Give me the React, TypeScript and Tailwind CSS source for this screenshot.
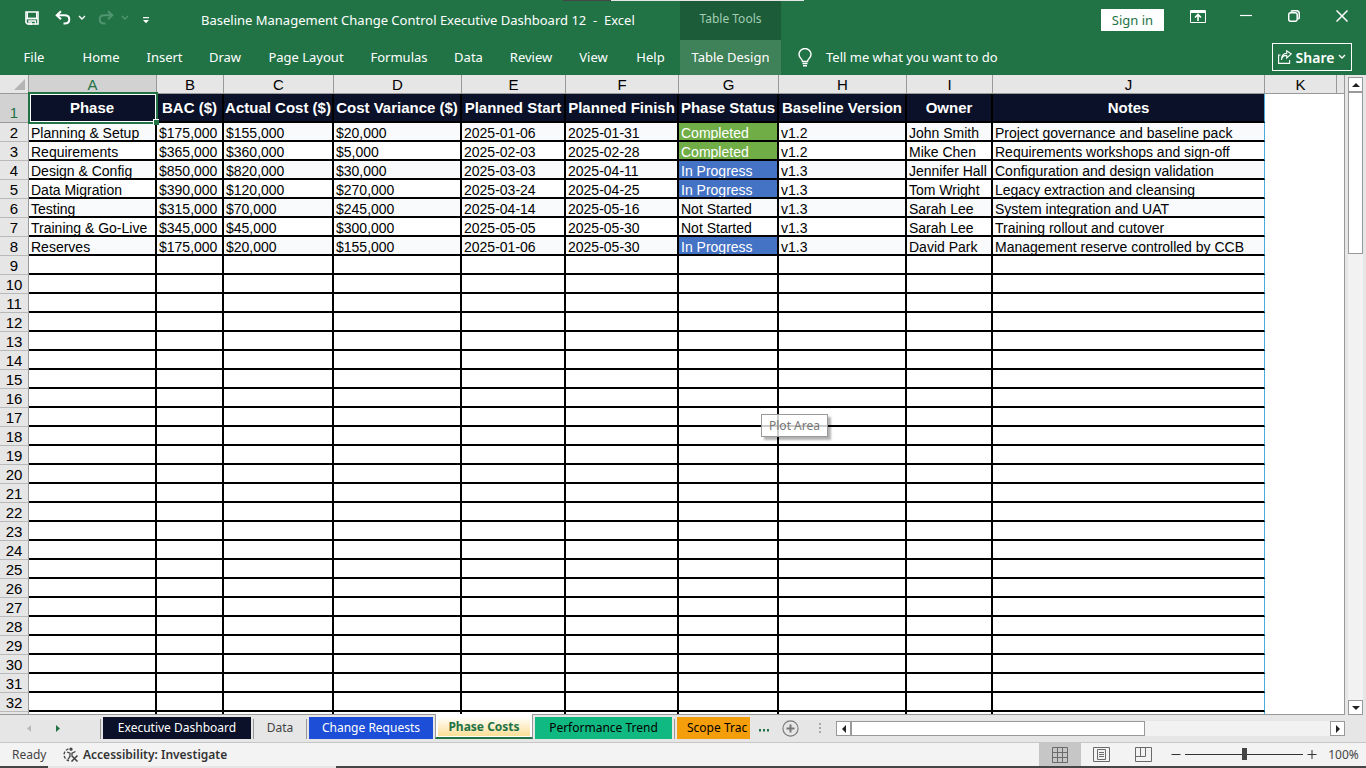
import React from "react";

type MenuTab = { label: string; width: string };

const menuTabs: MenuTab[] = [
  { label: "File", width: "w-[68px]" },
  { label: "Home", width: "w-[66px]" },
  { label: "Insert", width: "w-[61px]" },
  { label: "Draw", width: "w-[60px]" },
  { label: "Page Layout", width: "w-[102px]" },
  { label: "Formulas", width: "w-[84px]" },
  { label: "Data", width: "w-[55px]" },
  { label: "Review", width: "w-[70px]" },
  { label: "View", width: "w-[55px]" },
  { label: "Help", width: "w-[59px]" },
];

const columns = [
  { letter: "A", title: "Phase", width: "w-[128px]" },
  { letter: "B", title: "BAC ($)", width: "w-[67px]" },
  { letter: "C", title: "Actual Cost ($)", width: "w-[110px]" },
  { letter: "D", title: "Cost Variance ($)", width: "w-[128px]" },
  { letter: "E", title: "Planned Start", width: "w-[104px]" },
  { letter: "F", title: "Planned Finish", width: "w-[113px]" },
  { letter: "G", title: "Phase Status", width: "w-[100px]" },
  { letter: "H", title: "Baseline Version", width: "w-[128px]" },
  { letter: "I", title: "Owner", width: "w-[86px]" },
  { letter: "J", title: "Notes", width: "w-[272px]" },
];

const phases: string[][] = [
  ["Planning & Setup", "$175,000", "$155,000", "$20,000", "2025-01-06", "2025-01-31", "Completed", "v1.2", "John Smith", "Project governance and baseline pack"],
  ["Requirements", "$365,000", "$360,000", "$5,000", "2025-02-03", "2025-02-28", "Completed", "v1.2", "Mike Chen", "Requirements workshops and sign-off"],
  ["Design & Config", "$850,000", "$820,000", "$30,000", "2025-03-03", "2025-04-11", "In Progress", "v1.3", "Jennifer Hall", "Configuration and design validation"],
  ["Data Migration", "$390,000", "$120,000", "$270,000", "2025-03-24", "2025-04-25", "In Progress", "v1.3", "Tom Wright", "Legacy extraction and cleansing"],
  ["Testing", "$315,000", "$70,000", "$245,000", "2025-04-14", "2025-05-16", "Not Started", "v1.3", "Sarah Lee", "System integration and UAT"],
  ["Training & Go-Live", "$345,000", "$45,000", "$300,000", "2025-05-05", "2025-05-30", "Not Started", "v1.3", "Sarah Lee", "Training rollout and cutover"],
  ["Reserves", "$175,000", "$20,000", "$155,000", "2025-01-06", "2025-05-30", "In Progress", "v1.3", "David Park", "Management reserve controlled by CCB"],
];

const statusStyle: Record<string, string> = {
  Completed: "bg-[#70ad47] text-white",
  "In Progress": "bg-[#4472c4] text-white",
};

const LAST_ROW = 32;
const rowNumbers = Array.from({ length: LAST_ROW }, (_, i) => i + 2);

function Chevron({ className = "" }: { className?: string }) {
  return (
    <svg viewBox="0 0 8 6" width="8" height="6" className={className} fill="none" stroke="currentColor" strokeWidth="1.4">
      <path d="M1 1l3 3 3-3" />
    </svg>
  );
}

function UndoIcon({ flip = false }: { flip?: boolean }) {
  return (
    <svg viewBox="0 0 16 16" width="16" height="16" fill="none" stroke="currentColor" strokeWidth="2" className={flip ? "-scale-x-100" : ""}>
      <path d="M6 1.200L1.700 5.200 6 9.200M2 5.200h7.400c3 0 4.900 1.700 4.900 4.100 0 2.500-1.800 4.200-4.600 4.200H8.500" />
    </svg>
  );
}

function TitleBar() {
  return (
    <div className="flex h-10 items-stretch">
      <div className="flex w-[680px] shrink-0 items-center pl-[25px]">
        <button aria-label="Save" className="mr-4 -mt-1">
          <svg viewBox="0 0 14 14" width="14" height="14" fill="none" stroke="currentColor">
            <path d="M1 1h12v12H2.500L1 11.500z" strokeWidth="1.600" />
            <path d="M1 7.500h12" strokeWidth="1.800" />
            <path d="M2.500 1v6M11.500 1v6" strokeWidth="1" />
            <path d="M4 13.500v-3.500h6.500v3.500" strokeWidth="1.300" />
            <path d="M6 11v3" strokeWidth="1.600" />
          </svg>
        </button>
        <button aria-label="Undo" className="-mt-1">
          <UndoIcon />
        </button>
        <button aria-label="Undo history" className="-mt-1 ml-[7px]">
          <Chevron />
        </button>
        <button aria-label="Redo" className="-mt-1 ml-3 text-[#4f9570]">
          <UndoIcon flip />
        </button>
        <button aria-label="Redo history" className="-mt-1 ml-[7px] text-[#4f9570]">
          <Chevron />
        </button>
        <button aria-label="Customize Quick Access Toolbar" className="ml-3.5">
          <svg viewBox="0 0 7 7" width="7" height="7" fill="currentColor">
            <path d="M0 0h6v1.300H0zM0 3h6L3 6.200z" />
          </svg>
        </button>
        <h1 className="ml-[51px] mt-px whitespace-pre text-[13px]">Baseline Management Change Control Executive Dashboard 12  -  Excel</h1>
      </div>
      <div className="flex w-[101px] shrink-0 items-center justify-center bg-[#1c5c38] text-[12px] text-[#a3ccb4]">
        <span className="-mt-0.5">Table Tools</span>
      </div>
      <div className="flex flex-1 items-center justify-end pr-[18px]">
        <button className="mr-[26px] h-[22px] w-[63px] bg-white text-[13px] leading-[20px] text-[#217346]">Sign in</button>
        <button aria-label="Ribbon Display Options" className="-mt-2 mr-[34px]">
          <svg viewBox="0 0 16 13" width="16" height="13" fill="none" stroke="currentColor">
            <path d="M.5.5h15v12H.5zM.5 2.500h15M1 1.500h14" />
            <path d="M8 11V5M5 7.500l3-3 3 3" strokeWidth="1.600" />
          </svg>
        </button>
        <button aria-label="Minimize" className="-mt-2 mr-9">
          <svg viewBox="0 0 12 12" width="12" height="12" stroke="currentColor">
            <path d="M0 5.500h12" strokeWidth="1.200" />
          </svg>
        </button>
        <button aria-label="Restore" className="-mt-2 mr-9">
          <svg viewBox="0 0 12 12" width="12" height="12" fill="none" stroke="currentColor" strokeWidth="1.500">
            <rect x=".7" y="2.800" width="8.500" height="8.500" rx="2" />
            <path d="M2.800 1.600C3.300 1 4 .7 5 .7h3.500c1.800 0 2.800 1 2.800 2.800V7c0 1-.3 1.700-1 2.200" />
          </svg>
        </button>
        <button aria-label="Close" className="-mt-2">
          <svg viewBox="0 0 12 12" width="12" height="12" stroke="currentColor" strokeWidth="1.500">
            <path d="M.5.5l11 11M11.500.5l-11 11" />
          </svg>
        </button>
      </div>
    </div>
  );
}

function MenuBar() {
  return (
    <div className="flex h-[35px] items-stretch text-[13px]">
      {menuTabs.map((tab) => (
        <button key={tab.label} className={`${tab.width} shrink-0 whitespace-nowrap`}>
          {tab.label}
        </button>
      ))}
      <button className="w-[101px] shrink-0 whitespace-nowrap bg-[#3f8159]">Table Design</button>
      <button className="ml-[17px] flex items-center gap-3.5 whitespace-nowrap">
        <svg viewBox="0 0 14 19" width="14" height="19" fill="none" stroke="currentColor" strokeWidth="1.400">
          <path d="M4.500 13.500c0-2.500-3.500-3.500-3.500-7a6 6 0 0112 0c0 3.500-3.500 4.500-3.500 7z" />
          <path d="M4.500 15.500h5M5 17.700h4" strokeWidth="1.600" />
        </svg>
        <span>Tell me what you want to do</span>
      </button>
      <div className="flex flex-1 items-start justify-end pr-3.5 pt-[3px]">
        <button className="flex h-7 w-20 items-center justify-center gap-1 border border-white text-[14px] font-semibold">
          <svg viewBox="0 0 14 14" width="14" height="14" fill="none" stroke="currentColor" strokeWidth="1.100">
            <path d="M2.500 5H.6v8.400h11V10" />
            <path d="M3.500 10c.3-3 2-4.600 5.200-4.600V8l4.600-4L8.700.8v2.400C5 3.400 3.500 6 3.500 10z" />
          </svg>
          Share
          <Chevron />
        </button>
      </div>
    </div>
  );
}

function Sheet() {
  return (
    <main className="min-w-0 flex-1 overflow-hidden border-b border-r border-[#999999] bg-white font-['Liberation_Sans',Arial,sans-serif]">
      <table className="w-full table-fixed border-separate border-spacing-0 text-[14px] text-black">
        <colgroup>
          <col className="w-[29px]" />
          {columns.map((c) => (
            <col key={c.letter} className={c.width} />
          ))}
          <col />
          <col className="w-[7px]" />
        </colgroup>
        <thead>
          <tr className="h-[19px] bg-[#e6e6e6] text-[15px]">
            <th className="border-b border-r border-[#999999] p-0">
              <svg viewBox="0 0 11 11" width="11" height="11" className="ml-auto mr-[3px]" fill="#b4b4b4">
                <path d="M11 0v11H0z" />
              </svg>
            </th>
            {columns.map((c) => (
              <th
                key={c.letter}
                scope="col"
                className={`border-b border-r border-[#999999] p-0 pt-0.5 font-normal leading-4 ${c.letter === "A" ? "bg-[#d2d2d2] text-[#217346]" : ""}`}
              >
                {c.letter}
              </th>
            ))}
            <th scope="col" className="border-b border-r border-[#999999] p-0 pt-0.5 font-normal leading-4">K</th>
            <th className="border-b border-[#999999] p-0" />
          </tr>
        </thead>
        <tbody>
          <tr className="h-[29px]">
            <th scope="row" className="border-b border-r border-[#999999] bg-[#d2d2d2] p-0 align-bottom text-[15px] font-normal leading-[18px] text-[#217346]">1</th>
            {columns.map((c) => (
              <th
                key={c.letter}
                className={`relative whitespace-nowrap border-b-2 border-b-black bg-[#0a1128] p-0 text-[15px] font-bold leading-[27px] text-white ${
                  c.letter === "J" ? "border-r border-r-[#45aede]" : "border-r-2 border-r-black"
                }`}
              >
                {c.title}
                {c.letter === "A" && (
                  <span className="absolute -bottom-[3px] -left-[1px] -right-[3px] -top-[2px] z-10 border-2 border-[#217346]">
                    <span className="block h-full border border-white" />
                    <span className="absolute -bottom-[3px] -right-[3px] h-[6px] w-[6px] border-l border-t border-white bg-[#217346]" />
                  </span>
                )}
              </th>
            ))}
            <td />
            <td />
          </tr>
          {rowNumbers.map((n, i) => {
            const phase = phases[i];
            const band = phase && i % 2 === 0 ? "bg-[#f8fafc]" : "";
            return (
              <tr key={n} className="h-[19px]">
                <th scope="row" className="border-b border-r border-b-[#b9b9b9] border-r-[#999999] bg-[#e6e6e6] p-0 pt-0.5 text-[15px] font-normal leading-4">
                  {n <= LAST_ROW ? n : ""}
                </th>
                {columns.map((c, k) => {
                  const text = phase ? phase[k] : "";
                  return (
                    <td
                      key={c.letter}
                      className={`border-b-2 border-b-black p-0 ${
                        c.letter === "J" ? "border-r border-r-[#45aede]" : "border-r-2 border-r-black"
                      } ${(c.letter === "G" && statusStyle[text]) || band}`}
                    >
                      <div className="h-[17px] overflow-hidden whitespace-nowrap pl-0.5 leading-[21px]">{text}</div>
                    </td>
                  );
                })}
                <td />
                <td />
              </tr>
            );
          })}
        </tbody>
      </table>
    </main>
  );
}

function VerticalScroll() {
  return (
    <div className="flex w-[21px] shrink-0 flex-col bg-[#e6e6e6] px-[3px] pt-0.5">
      <button aria-label="Scroll up" className="flex h-[15px] shrink-0 items-center justify-center border border-[#999999] bg-white">
        <svg viewBox="0 0 8 4" width="8" height="4"><path d="M4 0l4 4H0z" fill="#222" /></svg>
      </button>
      <div className="flex-1 bg-[#f2f2f2]">
        <div className="h-[162px] border border-[#999999] bg-white" />
      </div>
      <button aria-label="Scroll down" className="flex h-[15px] shrink-0 items-center justify-center border border-[#999999] bg-white">
        <svg viewBox="0 0 8 4" width="8" height="4"><path d="M4 4l4-4H0z" fill="#222" /></svg>
      </button>
    </div>
  );
}

function Divider() {
  return <span className="mx-0.5 mt-1 h-5 w-px shrink-0 bg-[#999999]" />;
}

function SheetTabs() {
  return (
    <div className="flex h-7 shrink-0 items-start border-b border-[#c6c6c6] bg-[#e6e6e6] text-[12px]">
      <div className="flex h-[26px] w-[98px] shrink-0 items-center">
        <button aria-label="Previous sheets" className="ml-[27px] w-[5px]">
          <svg viewBox="0 0 4 7" width="4" height="7"><path d="M4 0v7L0 3.500z" fill="#b9b9b9" /></svg>
        </button>
        <button aria-label="Next sheets" className="ml-6">
          <svg viewBox="0 0 4 7" width="4" height="7"><path d="M0 0v7l4-3.500z" fill="#217346" /></svg>
        </button>
      </div>
      <Divider />
      <button className="mt-0.5 h-[22px] w-[148px] shrink-0 bg-[#0a1128] text-white">Executive Dashboard</button>
      <Divider />
      <button className="mt-0.5 h-[22px] w-[48px] shrink-0 text-[#444444]">Data</button>
      <Divider />
      <button className="mt-0.5 h-[22px] w-[124px] shrink-0 bg-[#1d4ed8] text-white">Change Requests</button>
      <button className="-mt-px ml-0.5 h-[25px] w-[98px] shrink-0 border-x border-b-2 border-b-[#217346] border-x-[#999999] bg-white px-0.5 pb-px pt-0.5 font-bold text-[#217346]">
        <span className="block h-5 bg-linear-to-b from-white to-[#fbdf96] leading-[22px]">Phase Costs</span>
      </button>
      <button className="ml-0.5 mt-0.5 h-[22px] w-[137px] shrink-0 bg-[#10b981] text-black">Performance Trend</button>
      <Divider />
      <button className="mt-0.5 h-[22px] w-[73px] shrink-0 whitespace-nowrap bg-[#f59e0b] pl-2.5 text-left text-black">Scope Trac</button>
      <button aria-label="More sheets" className="ml-2 mt-[14px] w-3 shrink-0 text-[#217346]">
        <svg viewBox="0 0 12 3" width="12" height="3" fill="currentColor"><path d="M1 0h2v2.500H1zM5 0h2v2.500H5zM9 0h2v2.500H9z" /></svg>
      </button>
      <button aria-label="New sheet" className="ml-3 mt-[5px] shrink-0 text-[#777777]">
        <svg viewBox="0 0 17 17" width="17" height="17" fill="none" stroke="currentColor">
          <circle cx="8.500" cy="8.500" r="7.600" strokeWidth="1.100" />
          <path d="M8.500 4.500v8M4.500 8.500h8" strokeWidth="2" />
        </svg>
      </button>
      <svg viewBox="0 0 2 10" width="2" height="10" className="ml-5 mt-2 shrink-0" fill="#a8a8a8"><path d="M0 0h2v2H0zM0 4h2v2H0zM0 8h2v2H0z" /></svg>
      <div className="ml-[15px] mr-[21px] mt-[6px] flex h-[15px] min-w-0 flex-1 bg-[#f2f2f2]">
        <button aria-label="Scroll left" className="flex w-[15px] shrink-0 items-center justify-center border border-[#999999] bg-white">
          <svg viewBox="0 0 4 8" width="4" height="8"><path d="M4 0v8L0 4z" fill="#222" /></svg>
        </button>
        <div className="w-[294px] border border-[#999999] bg-white" />
        <button aria-label="Scroll right" className="ml-auto flex w-[15px] shrink-0 items-center justify-center border border-[#999999] bg-white">
          <svg viewBox="0 0 4 8" width="4" height="8"><path d="M0 0v8l4-4z" fill="#222" /></svg>
        </button>
      </div>
    </div>
  );
}

function StatusBar() {
  return (
    <footer className="flex h-[23px] shrink-0 items-center bg-[#f3f3f3] text-[12px] text-[#444444]">
      <span className="w-[63px] shrink-0 pl-3">Ready</span>
      <button className="flex items-center gap-1 font-semibold text-[#333333]">
        <svg viewBox="0 0 16 16" width="16" height="16" fill="none" stroke="#444" strokeWidth="1.300">
          <path d="M5.500 1.800A6.500 6.500 0 001 7.500c0 3 2 5.600 5 6.300" strokeDasharray="3 1.500" />
          <circle cx="8" cy="2.200" r="1" fill="#444" />
          <path d="M4 5l3 1.200v3L5 12.500M12.500 4.500L9 6.200v2" />
          <path d="M8.500 8.500l6 6M14.500 8.500l-6 6" strokeWidth="1.600" />
        </svg>
        Accessibility: Investigate
      </button>
      <div className="ml-auto flex h-full items-center">
        <button aria-label="Normal view" className="flex h-full w-[42px] items-center justify-center bg-[#c6c6c6]">
          <svg viewBox="0 0 16 16" width="16" height="16" fill="none" stroke="#6a6a6a" strokeWidth="1">
            <path d="M.5.5h15v15H.5zM5.500.5v15M10.500.5v15M.5 5.500h15M.5 10.500h15" />
          </svg>
        </button>
        <button aria-label="Page layout view" className="flex h-full w-[41px] items-center justify-center">
          <svg viewBox="0 0 17 15" width="17" height="15" fill="none" stroke="#6a6a6a">
            <path d="M.5.5h16v14H.5zM4.500 2.500h8v10h-8zM6 5.500h5M6 7.500h5M6 9.500h5" />
          </svg>
        </button>
        <button aria-label="Page break preview" className="flex h-full w-[42px] items-center justify-center">
          <svg viewBox="0 0 17 15" width="17" height="15" fill="none" stroke="#6a6a6a">
            <path d="M.5.5h16v14H.5zM.5 9.500h10v-9M5.500.5v9" />
          </svg>
        </button>
        <button aria-label="Zoom out" className="ml-[7px]">
          <svg viewBox="0 0 10 10" width="10" height="10" stroke="#333"><path d="M.5 4.500h9" /></svg>
        </button>
        <input
          type="range"
          aria-label="Zoom"
          min={10}
          max={190}
          defaultValue={100}
          className="mx-1 h-3 w-[118px] appearance-none bg-transparent [&::-webkit-slider-runnable-track]:h-px [&::-webkit-slider-runnable-track]:bg-[#333333] [&::-webkit-slider-thumb]:-mt-[6px] [&::-webkit-slider-thumb]:h-3 [&::-webkit-slider-thumb]:w-[5px] [&::-webkit-slider-thumb]:appearance-none [&::-webkit-slider-thumb]:bg-[#444444]"
        />
        <button aria-label="Zoom in">
          <svg viewBox="0 0 10 10" width="10" height="10" stroke="#333"><path d="M.5 4.500h9M5 0v9" /></svg>
        </button>
        <button className="w-[49px] pl-1 text-center">100%</button>
      </div>
    </footer>
  );
}

export default function App() {
  return (
    <div className="relative flex h-screen flex-col overflow-hidden bg-[#e6e6e6] font-['Noto_Sans','Open_Sans',sans-serif]">
      <header className="shrink-0 bg-[#217346] text-white">
        <TitleBar />
        <MenuBar />
      </header>
      <div className="flex min-h-0 flex-1">
        <Sheet />
        <VerticalScroll />
      </div>
      <SheetTabs />
      <StatusBar />
      <div className="flex h-0.5 shrink-0 bg-[#454545]">
        <span className="ml-12 w-72 bg-[#e6e6e6]" />
      </div>
      <div className="absolute left-[563px] top-0 flex h-px w-[241px] bg-[#e6e6e6]">
        <span className="w-12 bg-[#454545]" />
      </div>
      <div
        role="tooltip"
        className="absolute left-[761px] top-[414px] h-[23px] w-[67px] border border-[#999999] bg-white/80 text-center text-[12px] leading-[21px] text-[#767676] shadow-[3px_3px_2px_rgba(0,0,0,0.3)]"
      >
        Plot Area
      </div>
    </div>
  );
}
